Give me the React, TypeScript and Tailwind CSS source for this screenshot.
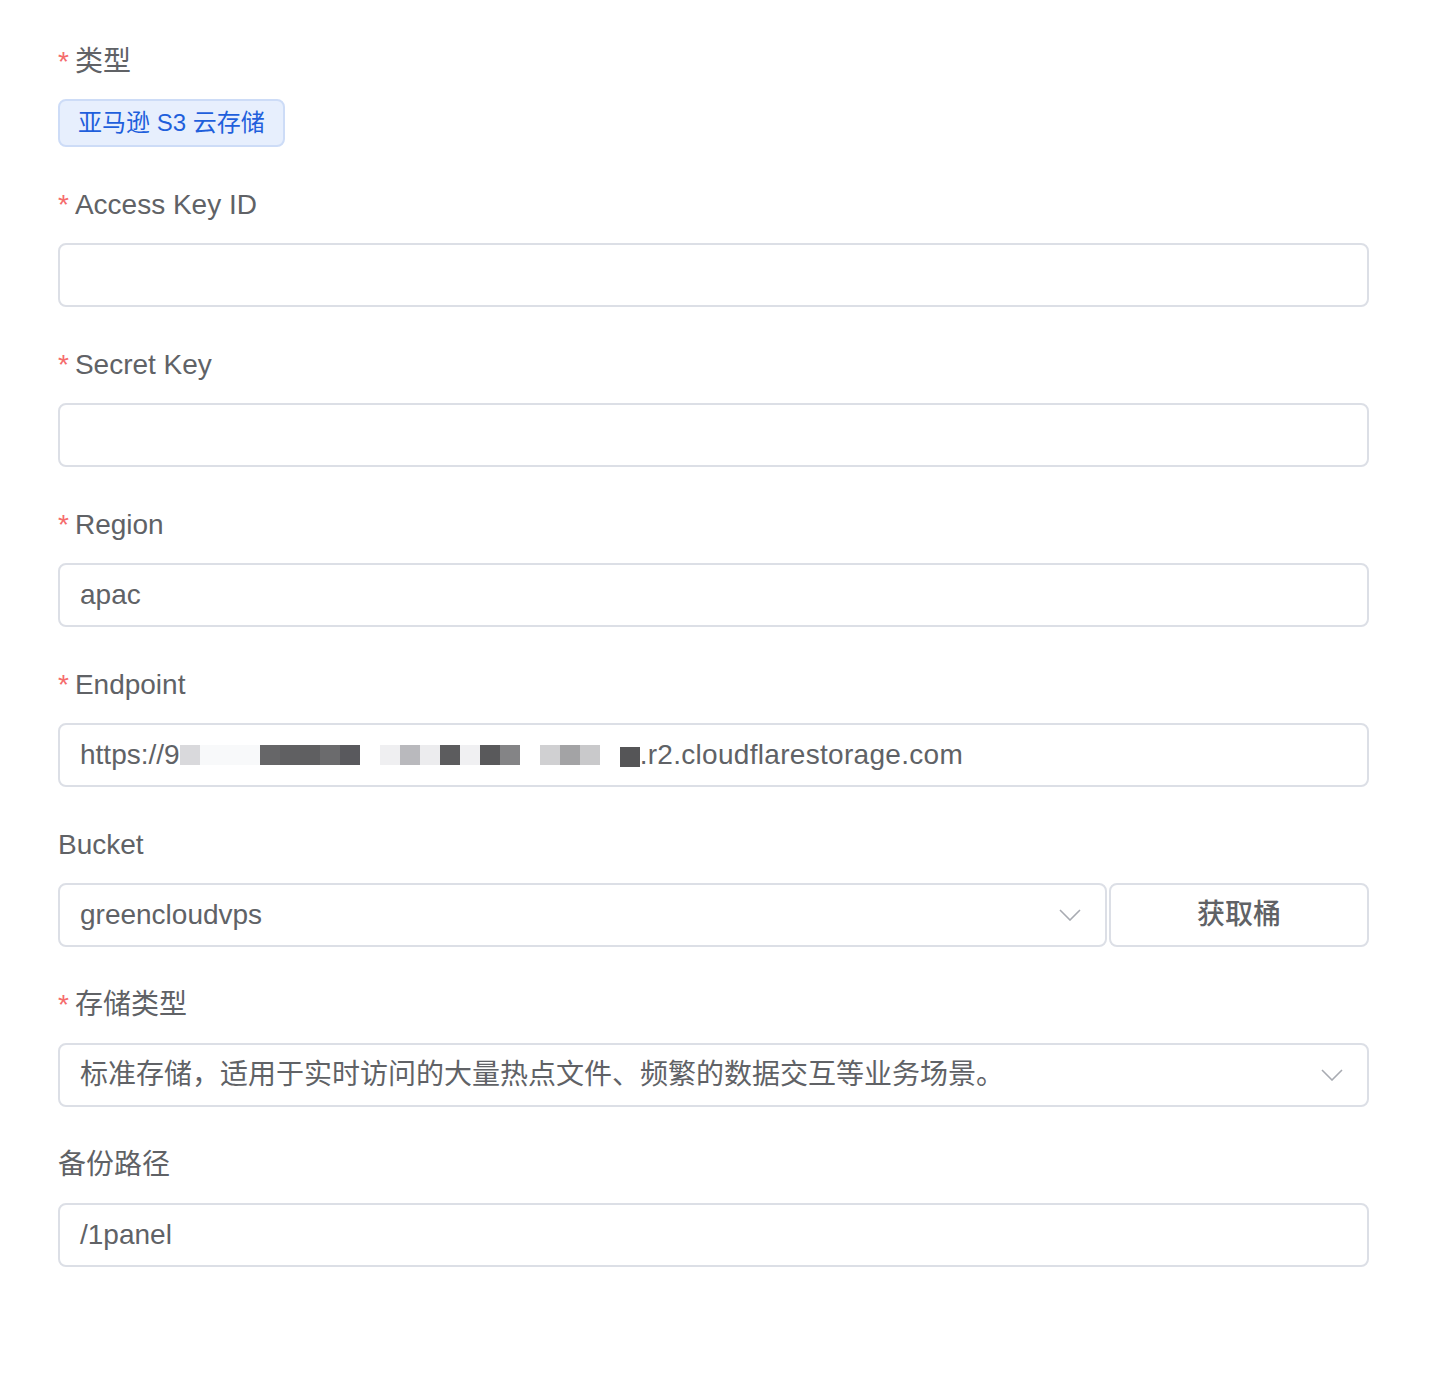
const font = { fontFamily: '"Liberation Sans", "Noto Sans CJK SC", sans-serif' };

const mosaic: (string | null)[] = [
  '#d9d9dc', '#f8f9fa', '#f8f9fa', '#f8f9fa', '#666668', '#606062', '#5f5f61', '#6b6b6d', '#59595d',
  null, '#efeff1', '#b9b9bd', '#ececee', '#5c5c5e', '#f0f0f2', '#59595b', '#848486', null,
  '#d0d0d2', '#a3a3a5', '#c9c9cb', null, '#555557',
];

function Label({ text, required = true }: { text: string; required?: boolean }) {
  return (
    <div className="mb-[18px] flex h-[40px] items-center text-[28px] text-[#606266]">
      {required && <span className="mr-[6px] text-[#f56c6c]">*</span>}
      <span>{text}</span>
    </div>
  );
}

function Box({ children, className = '' }: { children?: React.ReactNode; className?: string }) {
  return (
    <div
      className={`flex h-[64px] items-center rounded-[8px] border-2 border-[#dcdfe6] bg-white px-[20px] text-[28px] text-[#606266] ${className}`}
    >
      {children}
    </div>
  );
}

function Chevron() {
  return (
    <svg width="22" height="12" viewBox="0 0 22 12" fill="none" className="ml-auto mr-[4px] shrink-0">
      <path d="M1 1 L11 11 L21 1" stroke="#a8abb2" strokeWidth="1.6" />
    </svg>
  );
}

export default function App() {
  return (
    <div className="min-h-[1392px] w-[1438px] bg-white" style={font}>
      <div className="ml-[58px] w-[1311px] pt-[42px]">
        <div className="mb-[38px]">
          <Label text="类型" />
          <div className="-mt-[1px] inline-flex h-[48px] items-center rounded-[8px] border-2 border-[#cddcf7] bg-[#e7effd] px-[18px] text-[24px] text-[#1f5fdc]">
            亚马逊 S3 云存储
          </div>
        </div>

        <div className="mb-[38px]">
          <Label text="Access Key ID" />
          <Box />
        </div>

        <div className="mb-[38px]">
          <Label text="Secret Key" />
          <Box />
        </div>

        <div className="mb-[38px]">
          <Label text="Region" />
          <Box>apac</Box>
        </div>

        <div className="mb-[38px]">
          <Label text="Endpoint" />
          <Box>
            <span>https://9</span>
            <span className="inline-flex h-[20px] items-start">
              {mosaic.map((c, i) => (
                <span
                  key={i}
                  className={`block h-[20px] w-[20px] ${i === 22 ? 'mt-[2px] h-[18px]' : ''}`}
                  style={{ backgroundColor: c ?? 'transparent' }}
                />
              ))}
            </span>
            <span className="tracking-[0.3px]">.r2.cloudflarestorage.com</span>
          </Box>
        </div>

        <div className="mb-[38px]">
          <Label text="Bucket" required={false} />
          <div className="flex gap-[2px]">
            <Box className="flex-1">
              <span>greencloudvps</span>
              <Chevron />
            </Box>
            <button
              type="button"
              className="flex h-[64px] w-[260px] items-center justify-center rounded-[8px] border-2 border-[#dcdfe6] bg-white text-[28px] font-medium text-[#606266]"
            >
              获取桶
            </button>
          </div>
        </div>

        <div className="mb-[38px]">
          <Label text="存储类型" />
          <Box>
            <span>标准存储，适用于实时访问的大量热点文件、频繁的数据交互等业务场景。</span>
            <Chevron />
          </Box>
        </div>

        <div className="mb-[38px]">
          <Label text="备份路径" required={false} />
          <Box>/1panel</Box>
        </div>
      </div>
    </div>
  );
}
